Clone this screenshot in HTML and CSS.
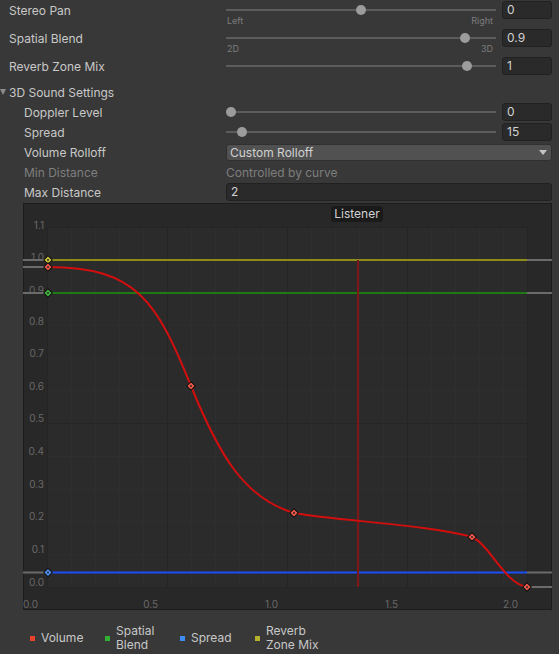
FILE: index.html
```html
<!DOCTYPE html>
<html lang="en">
<head>
    <meta charset="UTF-8">
    <title>Audio Source</title>
    <link rel="stylesheet" href="styles.css">
</head>
<body>
    <div class="inspector">
        <div class="row">
            <span class="label">Stereo Pan</span>
            <div class="control">
                <div class="track"><span class="knob" style="--v:0.5"></span></div>
                <span class="field">0</span>
            </div>
        </div>
        <div class="range-labels"><span>Left</span><span>Right</span></div>

        <div class="row">
            <span class="label">Spatial Blend</span>
            <div class="control">
                <div class="track"><span class="knob" style="--v:0.9"></span></div>
                <span class="field">0.9</span>
            </div>
        </div>
        <div class="range-labels"><span>2D</span><span>3D</span></div>

        <div class="row">
            <span class="label">Reverb Zone Mix</span>
            <div class="control">
                <div class="track"><span class="knob" style="--v:0.909"></span></div>
                <span class="field">1</span>
            </div>
        </div>

        <!-- 3D sound foldout -->
        <div class="row foldout">
            <span class="arrow"></span>
            <span class="label">3D Sound Settings</span>
        </div>

        <div class="row indent">
            <span class="label">Doppler Level</span>
            <div class="control">
                <div class="track"><span class="knob" style="--v:0"></span></div>
                <span class="field">0</span>
            </div>
        </div>
        <div class="row indent">
            <span class="label">Spread</span>
            <div class="control">
                <div class="track"><span class="knob" style="--v:0.0417"></span></div>
                <span class="field">15</span>
            </div>
        </div>
        <div class="row indent">
            <span class="label">Volume Rolloff</span>
            <div class="control">
                <div class="dropdown"><span>Custom Rolloff</span><span class="caret"></span></div>
            </div>
        </div>
        <div class="row indent disabled">
            <span class="label">Min Distance</span>
            <div class="control">Controlled by curve</div>
        </div>
        <div class="row indent">
            <span class="label">Max Distance</span>
            <div class="control">
                <span class="field wide">2</span>
            </div>
        </div>

        <!-- rolloff curve -->
        <div class="curve-panel">
            <svg class="curve" width="529" height="407" viewBox="23 203 529 407">
                <rect x="23.5" y="203.5" width="528" height="406" fill="#282828" stroke="#1c1c1c"/>
                <rect x="47.5" y="227" width="480" height="360" fill="#2b2b2b"/>
                <g stroke="#2e2e2e" stroke-width="1">
                    <path d="M71.5 227V587M95.5 227V587M119.5 227V587M143.5 227V587M191.5 227V587M215.5 227V587M239.5 227V587M263.5 227V587M311.5 227V587M335.5 227V587M359.5 227V587M383.5 227V587M431.5 227V587M455.5 227V587M479.5 227V587M503.5 227V587"/>
                    <path d="M47.5 554.5H527.5M47.5 521.5H527.5M47.5 489.5H527.5M47.5 456.5H527.5M47.5 390.5H527.5M47.5 358.5H527.5M47.5 325.5H527.5M47.5 292.5H527.5"/>
                </g>
                <g stroke="#252525" stroke-width="1">
                    <path d="M47.5 227V587M167.5 227V587M287.5 227V587M407.5 227V587M527.5 227V587"/>
                    <path d="M47.5 423.5H527.5M47.5 260.5H527.5M47.5 227.5H527.5M47.5 587.5H527.5"/>
                </g>

                <g class="axis">
                    <text x="44" y="229">1.1</text>
                    <text x="44" y="261">1.0</text>
                    <text x="44" y="294">0.9</text>
                    <text x="44" y="325">0.8</text>
                    <text x="44" y="357">0.7</text>
                    <text x="44" y="390">0.6</text>
                    <text x="44" y="422">0.5</text>
                    <text x="44" y="455">0.4</text>
                    <text x="44" y="488">0.3</text>
                    <text x="44" y="520">0.2</text>
                    <text x="44" y="553">0.1</text>
                    <text x="44" y="586">0.0</text>
                    <text x="38" y="608">0.0</text>
                    <text x="158" y="608">0.5</text>
                    <text x="278" y="608">1.0</text>
                    <text x="398" y="608">1.5</text>
                    <text x="518" y="608">2.0</text>
                </g>

                <g stroke="#6b6b6b" stroke-width="2">
                    <path d="M23 260H48M23 267H48M23 293H48M23 572.5H48"/>
                    <path d="M527 260H552M527 293H552M527 572.5H552M527 587H552"/>
                </g>

                <path d="M48 260H527" stroke="#8e8b17" stroke-width="2"/>
                <path d="M48 293H527" stroke="#1e7a12" stroke-width="2"/>
                <path d="M48 572.5H527" stroke="#1c4df5" stroke-width="2"/>
                <path d="M358 260V587" stroke="#7f1515" stroke-width="2"/>
                <path d="M48 267C137 267 157 302 191 386C219 455 244 498 294 513C340 521 430 525 472 537C490 545 505 584 527 587"
                      fill="none" stroke="#d20e0e" stroke-width="2"/>

                <g stroke="#111" stroke-width="1">
                    <rect x="-3" y="-3" width="6" height="6" fill="#c9c43a" transform="translate(48 260) rotate(45)"/>
                    <rect x="-3" y="-3" width="6" height="6" fill="#ef5848" transform="translate(48 267) rotate(45)"/>
                    <rect x="-3" y="-3" width="6" height="6" fill="#3fb43f" transform="translate(48 293) rotate(45)"/>
                    <rect x="-3" y="-3" width="6" height="6" fill="#4a8cf0" transform="translate(48 572.5) rotate(45)"/>
                    <rect x="-3" y="-3" width="6" height="6" fill="#ef5848" transform="translate(191 386) rotate(45)"/>
                    <rect x="-3" y="-3" width="6" height="6" fill="#ef5848" transform="translate(294 513) rotate(45)"/>
                    <rect x="-3" y="-3" width="6" height="6" fill="#ef5848" transform="translate(472 537) rotate(45)"/>
                    <rect x="-3" y="-3" width="6" height="6" fill="#ef5848" transform="translate(527 587) rotate(45)"/>
                </g>
                <g fill="#2a2a2a">
                    <circle cx="48" cy="260" r="1"/>
                    <circle cx="48" cy="267" r="1"/>
                    <circle cx="48" cy="293" r="1"/>
                    <circle cx="48" cy="572.5" r="1"/>
                    <circle cx="191" cy="386" r="1"/>
                    <circle cx="294" cy="513" r="1"/>
                    <circle cx="472" cy="537" r="1"/>
                    <circle cx="527" cy="587" r="1"/>
                </g>

                <rect x="331" y="206" width="52" height="16" rx="3" fill="#1a1a1a"/>
                <text class="tag" x="357" y="218">Listener</text>
            </svg>
        </div>

        <div class="legend">
            <div class="legend-item"><span class="swatch red"></span><span>Volume</span></div>
            <div class="legend-item"><span class="swatch green"></span><span>Spatial<br>Blend</span></div>
            <div class="legend-item"><span class="swatch blue"></span><span>Spread</span></div>
            <div class="legend-item"><span class="swatch yellow"></span><span>Reverb<br>Zone Mix</span></div>
        </div>
    </div>
</body>
</html>
```

FILE: styles.css
```css
body {
    margin: 0;
    background: #383838;
    color: #c8c8c8;
    font-family: Inter, "Liberation Sans", sans-serif;
    font-size: 12px;
}

.inspector {
    width: 559px;
    height: 654px;
    overflow: hidden;
}

/* one property line */
.row {
    display: flex;
    align-items: center;
    height: 20px;
    padding: 0 7px 0 9px;
}
.label {
    width: 217px;
    flex: none;
    white-space: nowrap;
}
.row.indent {
    padding-left: 24px;
}
.row.indent .label {
    width: 202px;
}
.row.disabled {
    color: #7e7e7e;
}

.control {
    flex: 1;
    display: flex;
    align-items: center;
    gap: 6px;
}

/* slider */
.track {
    position: relative;
    flex: 1;
    height: 2px;
    background: #5c5c5c;
}
.knob {
    position: absolute;
    top: -4px;
    left: calc(var(--v) * (100% - 10px));
    width: 10px;
    height: 10px;
    border-radius: 50%;
    background: #9c9c9c;
}

.field {
    width: 50px;
    height: 18px;
    box-sizing: border-box;
    padding-left: 4px;
    line-height: 16px;
    background: #2a2a2a;
    border: 1px solid #212121;
    border-radius: 3px;
    color: #d2d2d2;
}
.field.wide {
    flex: 1;
}

.range-labels {
    display: flex;
    justify-content: space-between;
    width: 270px;
    height: 8px;
    box-sizing: border-box;
    margin: -3px 0 3px 226px;
    padding: 0 3px 0 1px;
    font-size: 9px;
    line-height: 8px;
    color: #7c7c7c;
}

/* foldout header */
.row.foldout {
    margin-top: 6px;
    padding-left: 0;
}
.arrow {
    width: 9px;
    flex: none;
    height: 8px;
}
.arrow::before {
    content: "";
    display: block;
    width: 0;
    height: 0;
    margin-top: 1px;
    border-left: 3.5px solid transparent;
    border-right: 3.5px solid transparent;
    border-top: 6px solid #8c8c8c;
}

/* dropdown */
.dropdown {
    flex: 1;
    display: flex;
    align-items: center;
    justify-content: space-between;
    height: 17px;
    box-sizing: border-box;
    padding-left: 3px;
    background: #515151;
    border: 1px solid #303030;
    border-radius: 3px;
    color: #d2d2d2;
}
.caret {
    width: 0;
    height: 0;
    margin-right: 4px;
    border-left: 4px solid transparent;
    border-right: 4px solid transparent;
    border-top: 5px solid #c4c4c4;
}

/* curve editor */
.curve-panel {
    height: 407px;
    margin: 1px 7px 0 23px;
}
.curve {
    display: block;
}
.axis text {
    font-family: Inter, "Liberation Sans", sans-serif;
    font-size: 10px;
    fill: #686868;
    text-anchor: end;
}
.tag {
    font-family: Inter, "Liberation Sans", sans-serif;
    font-size: 12px;
    fill: #d2d2d2;
    text-anchor: middle;
}

/* legend */
.legend {
    display: flex;
    align-items: center;
    height: 32px;
    padding: 12px 0 0 30px;
    line-height: 14px;
}
.legend-item {
    width: 75px;
    display: flex;
    align-items: center;
    gap: 6px;
}
.swatch {
    width: 5px;
    height: 5px;
    flex: none;
}
.swatch.red { background: #e8412c; }
.swatch.green { background: #33b033; }
.swatch.blue { background: #3c8ef2; }
.swatch.yellow { background: #b6b12c; }
```
